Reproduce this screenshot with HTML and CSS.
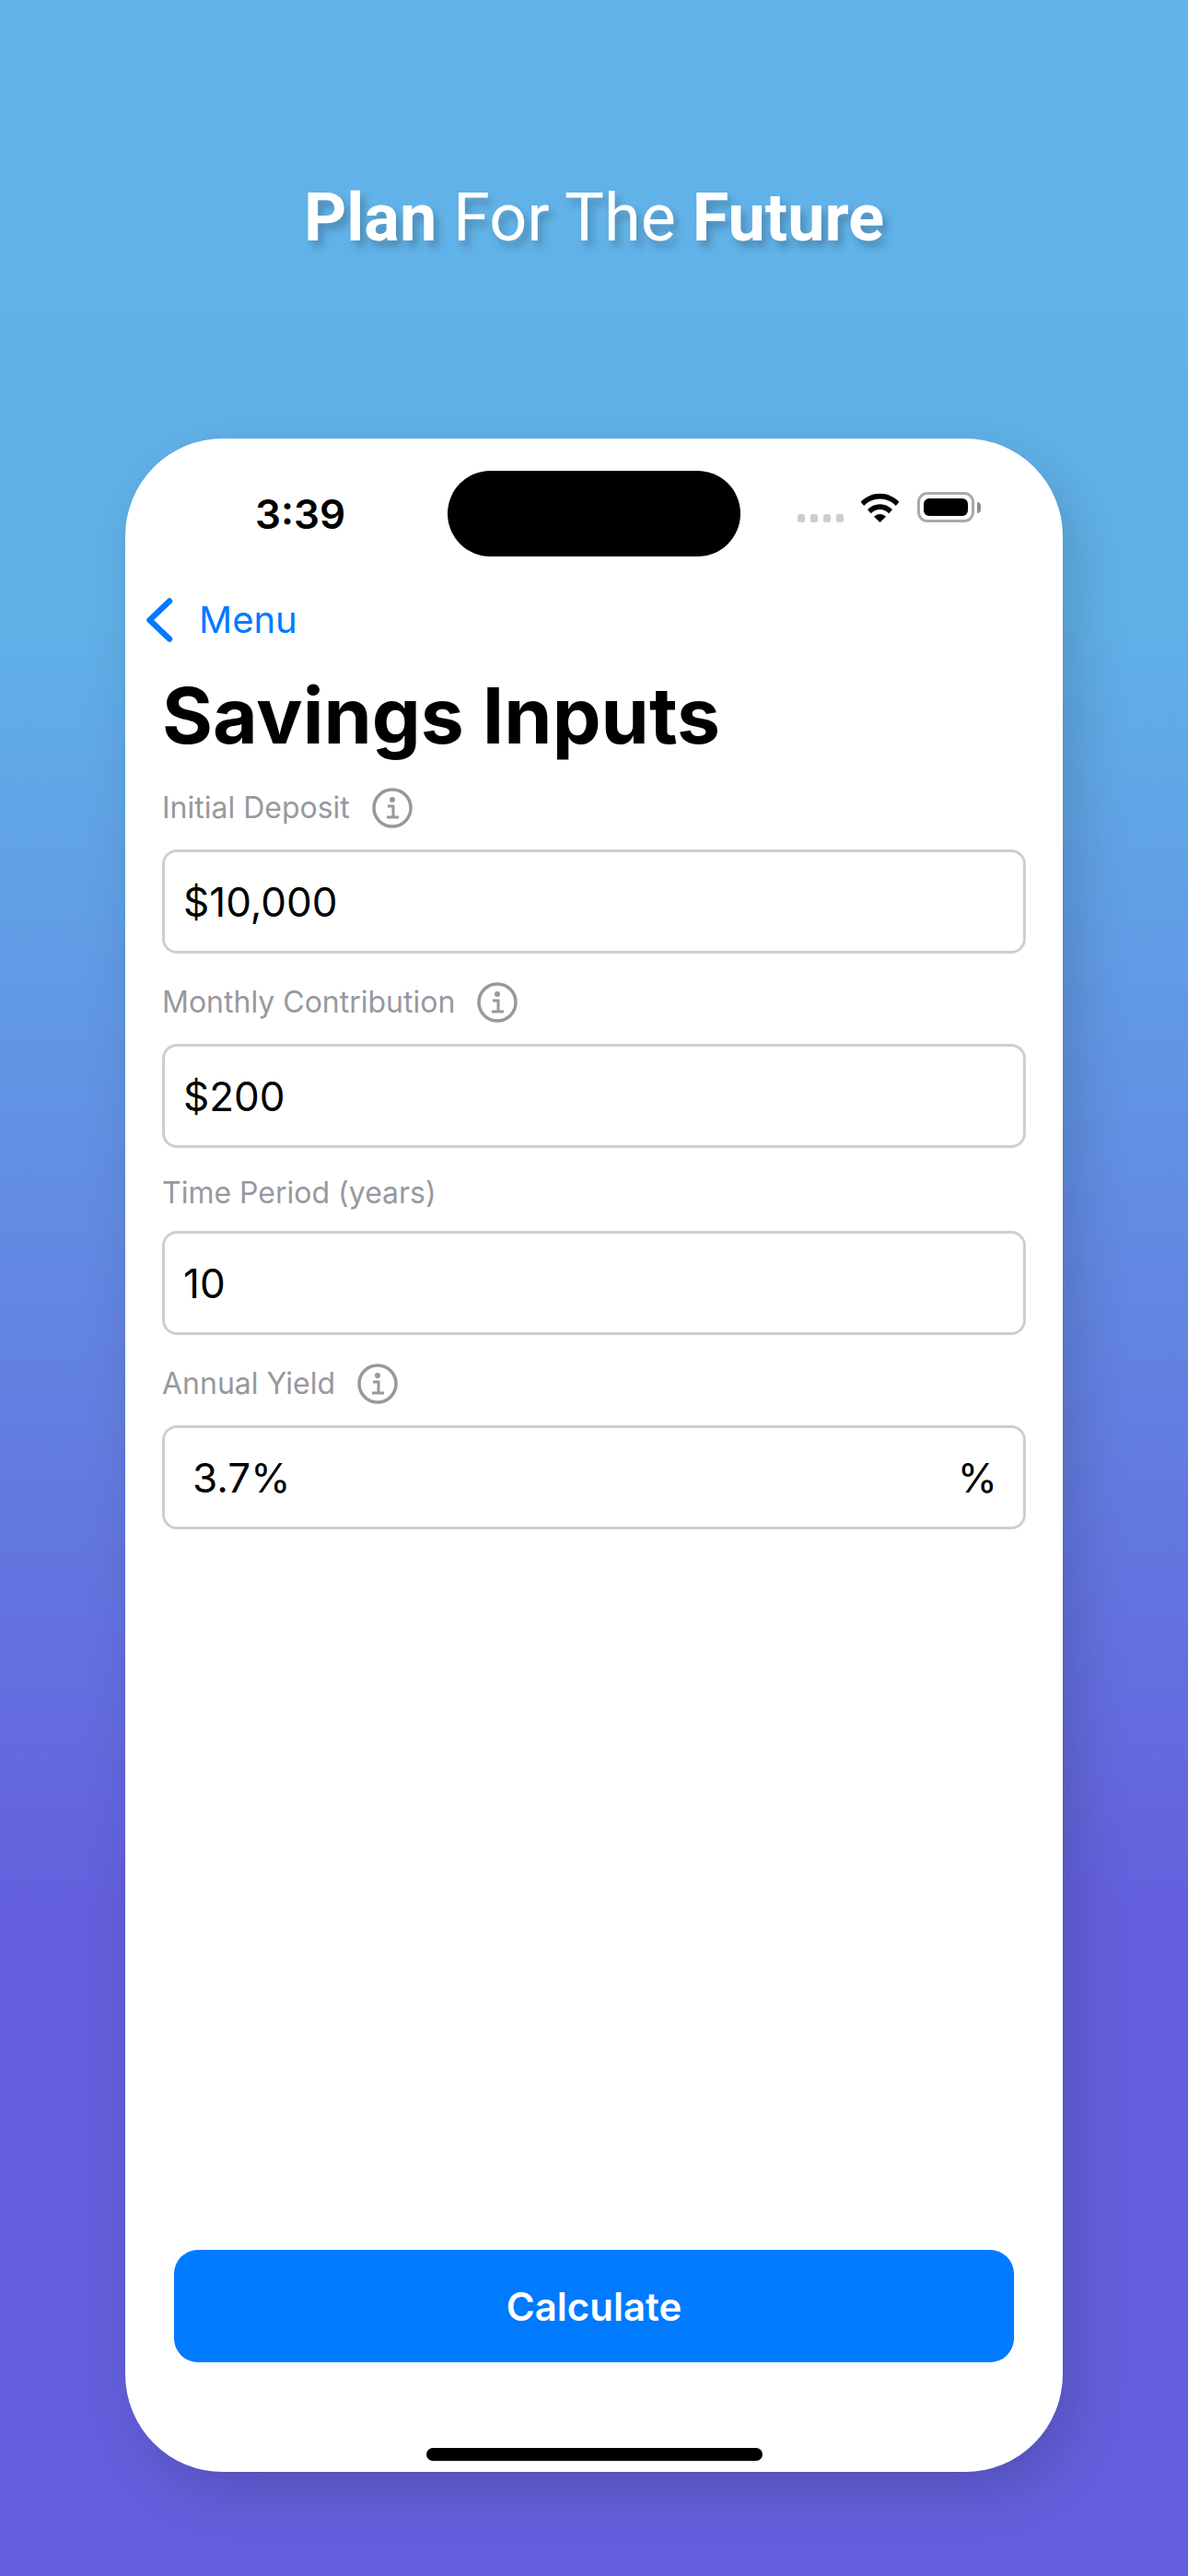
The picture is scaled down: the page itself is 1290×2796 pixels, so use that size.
FILE: index.html
```html
<!DOCTYPE html>
<html lang="en">
<head>
<meta charset="utf-8">
<title>Plan For The Future</title>
<link rel="stylesheet" href="styles.css">
</head>
<body>
<main class="screen">
  <h1 class="headline"><b>Plan</b> For The <b>Future</b></h1>
  <section class="phone">
    <div class="status">
      <div class="time">3:39</div>
      <div class="island"></div>
      <div class="status-icons">
        <span class="dots"><i></i><i></i><i></i><i></i></span>
        <svg class="wifi" viewBox="0 0 43 32" aria-hidden="true">
          <path d="M0.6 9.8C6 4.2 13.4 0.8 21.5 0.8S37 4.2 42.4 9.8L38.8 13.9C34.4 9.3 28.3 6.5 21.5 6.5S8.6 9.3 4.2 13.9Z"/>
          <path d="M8 18C11.5 14.4 16.2 12.2 21.5 12.2S31.5 14.4 35 18L31.3 22.2C28.8 19.6 25.3 17.9 21.5 17.9S14.2 19.6 11.7 22.2Z"/>
          <path d="M15 25.8C16.7 24.1 19 23 21.5 23S26.3 24.1 28 25.8L21.5 32Z"/>
        </svg>
        <span class="battery"><span class="battery-fill"></span></span>
        <span class="battery-cap"></span>
      </div>
    </div>
    <nav class="nav">
      <svg class="chevron" viewBox="0 0 30 48" aria-hidden="true"><path d="M26 3.5 4.500 24 26 44.500"/></svg>
      <span class="nav-label">Menu</span>
    </nav>
    <h2 class="title">Savings Inputs</h2>
    <form class="form">
      <div class="group">
        <div class="label-row"><span>Initial Deposit</span>
          <svg class="info" viewBox="0 0 44 44" aria-hidden="true"><circle class="ring" cx="22" cy="22" r="20"/><circle class="dot" cx="22" cy="13" r="3"/><path class="stem" d="M17 20H23V32M16 32H29"/></svg>
        </div>
        <div class="field">$10,000</div>
      </div>
      <div class="group">
        <div class="label-row"><span>Monthly Contribution</span>
          <svg class="info" viewBox="0 0 44 44" aria-hidden="true"><circle class="ring" cx="22" cy="22" r="20"/><circle class="dot" cx="22" cy="13" r="3"/><path class="stem" d="M17 20H23V32M16 32H29"/></svg>
        </div>
        <div class="field">$200</div>
      </div>
      <div class="group">
        <div class="label-row"><span>Time Period (years)</span></div>
        <div class="field">10</div>
      </div>
      <div class="group">
        <div class="label-row"><span>Annual Yield</span>
          <svg class="info" viewBox="0 0 44 44" aria-hidden="true"><circle class="ring" cx="22" cy="22" r="20"/><circle class="dot" cx="22" cy="13" r="3"/><path class="stem" d="M17 20H23V32M16 32H29"/></svg>
        </div>
        <div class="field field-yield"><span>3.7%</span><span>%</span></div>
      </div>
    </form>
    <button class="cta" type="button">Calculate</button>
    <div class="home"></div>
  </section>
</main>
</body>
</html>
```

FILE: styles.css
```css
* { box-sizing: border-box; }
html, body { margin: 0; padding: 0; }
body { width: 1290px; height: 2796px; overflow: hidden; font-family: "Inter", "Liberation Sans", sans-serif; }

.screen {
  height: 2796px;
  padding-top: 195px;
  background: linear-gradient(180deg, #62b3e8 0%, #60b1e8 24%, #6460dd 74%, #6460dd 100%);
}

.headline {
  margin: 0 0 197px;
  height: 84px;
  line-height: 84px;
  text-align: center;
  font-family: "Roboto", sans-serif;
  font-size: 72px;
  font-weight: 400;
  color: #fff;
  text-shadow: 5px 7px 8px rgba(0, 0, 0, 0.22);
}
.headline b { font-weight: 700; }

.phone {
  width: 1018px;
  height: 2207px;
  margin: 0 auto;
  display: flex;
  flex-direction: column;
  background: #fff;
  border-radius: 106px;
  box-shadow: 14px 22px 60px rgba(0, 0, 0, 0.16);
}

.status {
  display: grid;
  grid-template-columns: 1fr 318px 1fr;
  align-items: center;
  padding-top: 35px;
}
.time { padding-left: 141px; font-size: 44px; font-weight: 600; color: #000; }
.island { height: 93px; border-radius: 47px; background: #000; }
.status-icons { display: flex; align-items: center; justify-content: flex-end; padding-right: 89px; height: 33px; margin-top: -14px; }
.dots { display: flex; gap: 5.500px; margin-right: 18px; margin-top: 24px; }
.dots i { width: 8.500px; height: 8.500px; border-radius: 2.500px; background: #cdcdcd; }
.wifi { width: 43px; height: 32px; margin-right: 19px; fill: #000; }
.battery { width: 62px; height: 33px; padding: 4px; border: 3px solid #a9a9a9; border-radius: 11px; display: flex; }
.battery-fill { flex: 1; border-radius: 6px; background: #000; }
.battery-cap { width: 4px; height: 12px; margin-left: 3px; border-radius: 0 4px 4px 0; background: #8e8e8e; }

.nav { display: flex; align-items: center; gap: 28px; margin-top: 45px; padding-left: 22px; color: #007aff; }
.chevron { width: 30px; height: 48px; fill: none; stroke: #007aff; stroke-width: 6.500; stroke-linecap: round; stroke-linejoin: round; }
.nav-label { font-size: 40px; font-weight: 400; line-height: 48px; }

.title { margin: 28px 0 0 40px; height: 104px; line-height: 104px; font-size: 84px; font-weight: 700; color: #000; }

.form { display: flex; flex-direction: column; gap: 31px; margin-top: 26px; padding: 0 40px; }
.label-row { display: flex; align-items: center; gap: 24px; margin-bottom: 24px; font-size: 32px; line-height: 35px; color: #98989e; }
.info { width: 44px; height: 44px; margin: -0.500px 0; fill: none; }
.ring { stroke: #98989e; stroke-width: 3.500; }
.dot { fill: #98989e; }
.stem { stroke: #98989e; stroke-width: 3; }

.field {
  display: flex;
  align-items: center;
  height: 113px;
  padding: 0 20px;
  border: 3px solid #cfcfcf;
  border-radius: 16px;
  font-size: 44px;
  color: #000;
}
.field-yield { justify-content: space-between; padding: 0 28px 0 30px; }

.cta {
  height: 122px;
  margin: auto 53px 0;
  border: 0;
  border-radius: 26px;
  background: #007aff;
  color: #fff;
  font-family: inherit;
  font-size: 42px;
  font-weight: 600;
}

.home { width: 365px; height: 14px; margin: 93px auto 12px; border-radius: 7px; background: #000; }
```
